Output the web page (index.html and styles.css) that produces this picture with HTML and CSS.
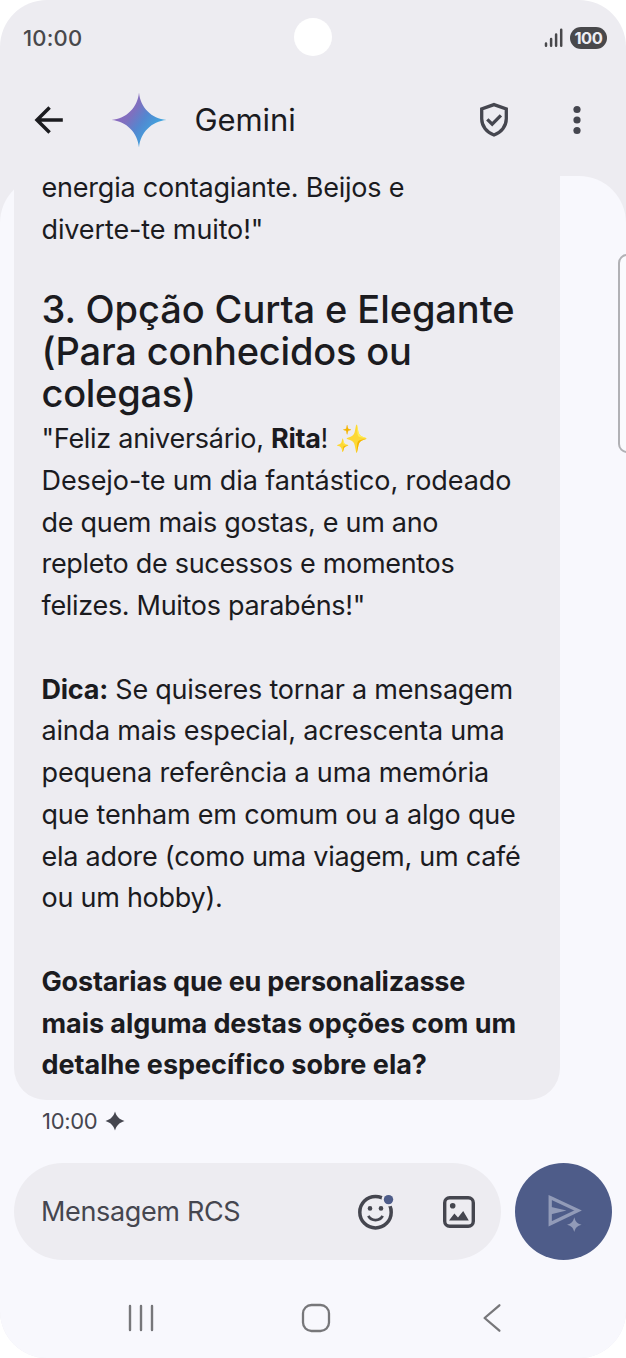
FILE: index.html
```
<!DOCTYPE html>
<html lang="pt">
<head>
<meta charset="utf-8">
<title>Gemini</title>
<link rel="stylesheet" href="styles.css">
</head>
<body>
<div class="phone">
  <div class="camera"></div>
  <header class="status">
    <span class="clock">10:00</span>
    <div class="status-icons">
      <svg class="signal" width="19" height="20" viewBox="0 0 19 20"><path d="M2 15.5v2.2M7.1 11v6.7M12.1 6.4v11.3M17.2 1.8v15.9" fill="none" stroke="#48484b" stroke-width="2.5" stroke-linecap="round"/></svg>
      <span class="battery">100</span>
    </div>
  </header>
  <div class="appbar">
    <svg class="back" width="30" height="30" viewBox="0 0 30 30"><path d="M28.8 15H3.2M15.6 2.4 3 15l12.6 12.6" fill="none" stroke="#1b1b1f" stroke-width="3.5"/></svg>
    <svg class="logo" width="54" height="54" viewBox="0 0 54 54">
      <defs><linearGradient id="spark" x1="8" y1="12" x2="44" y2="38" gradientUnits="userSpaceOnUse"><stop offset="0" stop-color="#9168c0"/><stop offset=".33" stop-color="#7e70bf"/><stop offset=".62" stop-color="#5387d0"/><stop offset="1" stop-color="#3fa6df"/></linearGradient></defs>
      <path d="M27 -0.500C28.400 14.500 39.500 25.600 54.500 27C39.500 28.400 28.400 39.500 27 54.500C25.600 39.500 14.500 28.400 -0.500 27C14.500 25.600 25.600 14.500 27 -0.500Z" fill="url(#spark)"/>
    </svg>
    <h1 class="title">Gemini</h1>
    <svg class="shield" width="30" height="36" viewBox="0 0 30 36"><path d="M15 2.6 27.3 7v9.8c0 7.4-5.1 13.7-12.3 16.2C7.800 30.500 2.700 24.200 2.700 16.800V7Z" fill="none" stroke="#45464f" stroke-width="3.300"/><path d="m8.300 17.300 4.900 4.900 8.700-8.800" fill="none" stroke="#45464f" stroke-width="3.300"/></svg>
    <svg class="more" width="8" height="30" viewBox="0 0 8 30"><g fill="#45464f"><circle cx="4" cy="4.500" r="3.600"/><circle cx="4" cy="15" r="3.600"/><circle cx="4" cy="25.500" r="3.600"/></g></svg>
  </div>
  <main class="sheet">
    <article class="bubble">
      <p><span class="line l1">energia contagiante. Beijos e</span><span class="line l2">diverte-te muito!"</span></p>
      <h2><span class="line h-a">3. Opção Curta e Elegante</span><span class="line h-b">(Para conhecidos ou</span><span class="line h-c">colegas)</span></h2>
      <p><span class="line b1">"Feliz aniversário, <b>Rita</b>! <span class="emoji">✨</span></span><span class="line b2">Desejo-te um dia fantástico, rodeado</span><span class="line b3">de quem mais gostas, e um ano</span><span class="line b4">repleto de sucessos e momentos</span><span class="line b5">felizes. Muitos parabéns!"</span></p>
      <p><span class="line d1"><b>Dica:</b> Se quiseres tornar a mensagem</span><span class="line d2">ainda mais especial, acrescenta uma</span><span class="line d3">pequena referência a uma memória</span><span class="line d4">que tenham em comum ou a algo que</span><span class="line d5">ela adore (como uma viagem, um café</span><span class="line d6">ou um hobby).</span></p>
      <p class="strong"><span class="line g1">Gostarias que eu personalizasse</span><span class="line g2">mais alguma destas opções com um</span><span class="line g3">detalhe específico sobre ela?</span></p>
    </article>
    <div class="stamp">
      <span>10:00</span>
      <svg width="18" height="18" viewBox="0 0 18 18"><path d="M9 -0.500C10.500 4.500 13.500 7.500 18.500 9C13.500 10.500 10.500 13.500 9 18.500C7.500 13.500 4.500 10.500 -0.500 9C4.500 7.500 7.500 4.500 9 -0.500Z" fill="#45464f"/></svg>
    </div>
    <div class="composer">
      <div class="input">
        <span class="placeholder">Mensagem RCS</span>
        <svg class="smile" width="36" height="38" viewBox="0 0 36 38">
          <circle cx="17.500" cy="19.200" r="15.700" fill="none" stroke="#45464f" stroke-width="3.500"/>
          <circle cx="30.500" cy="6.600" r="7" fill="#edecf1"/><circle cx="30.500" cy="6.600" r="4.700" fill="#4e5c89"/>
          <circle cx="12" cy="15.400" r="2.300" fill="#45464f"/><circle cx="23" cy="15.400" r="2.300" fill="#45464f"/>
          <path d="M10.300 22.900c1.500 2.700 4.100 4.200 7.200 4.200s5.700-1.500 7.200-4.200" fill="none" stroke="#45464f" stroke-width="2.800"/>
        </svg>
        <svg class="picture" width="32" height="32" viewBox="0 0 32 32">
          <rect x="1.700" y="1.700" width="28.600" height="28.600" rx="5" fill="none" stroke="#45464f" stroke-width="3.400"/>
          <circle cx="9.700" cy="9.800" r="2.800" fill="#45464f"/><path d="M6 24.500 11.400 17.500 15 21.400 20.200 15 25.800 24.500Z" fill="#45464f"/>
        </svg>
      </div>
      <div class="send">
        <svg width="38" height="38" viewBox="0 0 38 38">
          <path d="M5.200 4.600 33 17.600 5.200 30.800Z" fill="none" stroke="#929bb8" stroke-width="3.300"/><path d="M5.200 13.800 21.500 17.600 5.200 21.500Z" fill="#929bb8"/>
          <path d="M29.300 24.300C30.500 29 32.100 30.500 36.600 31.700C32.100 32.900 30.500 34.400 29.300 39.100C28.100 34.400 26.500 32.900 22 31.700C26.500 30.500 28.100 29 29.300 24.300Z" fill="#929bb8" stroke="#4e5c89" stroke-width="2" paint-order="stroke"/>
        </svg>
      </div>
    </div>
    <nav class="nav">
      <svg class="recents" width="28" height="28" viewBox="0 0 28 28"><path d="M3 2v24M14 2v24M25 2v24" stroke="#77777a" stroke-width="2.400" stroke-linecap="round"/></svg>
      <svg class="home" width="30" height="30" viewBox="0 0 30 30"><rect x="2" y="2" width="26" height="26" rx="8.500" fill="none" stroke="#77777a" stroke-width="2.300"/></svg>
      <svg class="prev" width="20" height="30" viewBox="0 0 20 30"><path d="M17.400 2.300 2.600 15l14.800 12.700" fill="none" stroke="#77777a" stroke-width="2.300" stroke-linecap="round" stroke-linejoin="round"/></svg>
    </nav>
  </main>
  <div class="handle"></div>
</div>
</body>
</html>
```
FILE: styles.css
```
* { box-sizing: border-box; }
body { margin: 0; background: #fff; font-family: Inter, "Liberation Sans", sans-serif; color: #1b1b1f; }
svg { display: block; flex: none; overflow: visible; }
h1, h2, p { margin: 0; font-weight: 400; }

.phone { position: relative; display: flex; flex-direction: column; width: 626px; height: 1358px; overflow: hidden; border-radius: 47px; background: #edecf1; }
.camera { position: absolute; left: 294px; top: 17.500px; width: 38px; height: 38px; border-radius: 50%; background: #fff; }

.status { display: flex; justify-content: space-between; align-items: center; height: 76px; padding: 0 19px 0 23px; color: #48484b; }
.clock { font-size: 22px; font-weight: 550; letter-spacing: 0.2px; }
.status-icons { display: flex; align-items: center; gap: 7px; }
.battery { width: 37px; height: 22px; border-radius: 11px; background: #48484b; color: #edecf1; font-size: 16.500px; line-height: 22px; font-weight: 700; text-align: center; letter-spacing: -0.4px; }

.appbar { display: flex; align-items: center; height: 88px; padding: 0 45px 0 34px; }
.logo { margin-left: 48px; }
.title { flex: 1; margin: -2px 0 0 28.500px; font-size: 31px; font-weight: 380; letter-spacing: -0.100px; }
.shield { margin-right: 64px; }

.sheet { display: flex; flex-direction: column; flex: 1; margin-top: 12px; border-radius: 47px 47px 0 0; background: #f8f8fd; }
.bubble { width: 546px; height: 924px; margin-left: 14px; padding-left: 27.500px; border-radius: 0 0 32px 32px; background: #edecf1; font-size: 27px; line-height: 41.760px; }
.bubble p { margin-bottom: 41.760px; font-weight: 380; }
.bubble p:first-child { margin-top: -8.600px; }
.bubble b, .bubble .strong { font-weight: 680; }
.bubble h2 { margin: -3.500px 0 3.500px; font-size: 38px; font-weight: 500; }
.line { display: block; white-space: nowrap; }
.l1 { letter-spacing: -0.210px; }
.l2 { letter-spacing: -0.120px; }
.h-a { letter-spacing: -0.080px; }
.h-b { letter-spacing: -0.170px; }
.h-c { letter-spacing: -0.280px; }
.b1 { letter-spacing: -0.280px; }
.b2 { letter-spacing: -0.090px; }
.b3 { letter-spacing: -0.290px; }
.b4 { letter-spacing: -0.300px; }
.b5 { letter-spacing: -0.310px; }
.d1 { letter-spacing: -0.240px; }
.d2 { letter-spacing: -0.180px; }
.d3 { letter-spacing: -0.150px; }
.d4 { letter-spacing: -0.200px; }
.d5 { letter-spacing: -0.260px; }
.d6 { letter-spacing: -0.260px; }
.g1 { letter-spacing: -0.180px; }
.g2 { letter-spacing: -0.070px; }
.g3 { letter-spacing: -0.010px; }
.emoji { font-size: 27px; line-height: 1; }

.stamp { display: flex; align-items: center; gap: 9px; height: 42px; padding-left: 42px; color: #45464f; font-size: 22px; font-weight: 380; letter-spacing: -0.300px; }
.composer { display: flex; justify-content: space-between; margin-top: 21px; padding: 0 14px; }
.input { display: flex; align-items: center; width: 487px; height: 97px; padding: 0 26px 0 27px; border-radius: 49px; background: #edecf1; color: #45464f; }
.placeholder { flex: 1; font-size: 27px; font-weight: 380; letter-spacing: -0.350px; }
.smile { margin-right: 49px; }
.send { display: flex; align-items: center; justify-content: center; width: 97px; height: 97px; border-radius: 50%; background: #4e5c89; }
.nav { display: flex; align-items: center; height: 97px; padding: 18px 124px 0 127px; }
.home { margin-left: 146px; }
.prev { margin-left: auto; }
.handle { position: absolute; left: 618px; top: 254px; width: 24px; height: 199px; border: 2px solid #b1b1b5; border-radius: 9px; background: #fafafd; }
```
